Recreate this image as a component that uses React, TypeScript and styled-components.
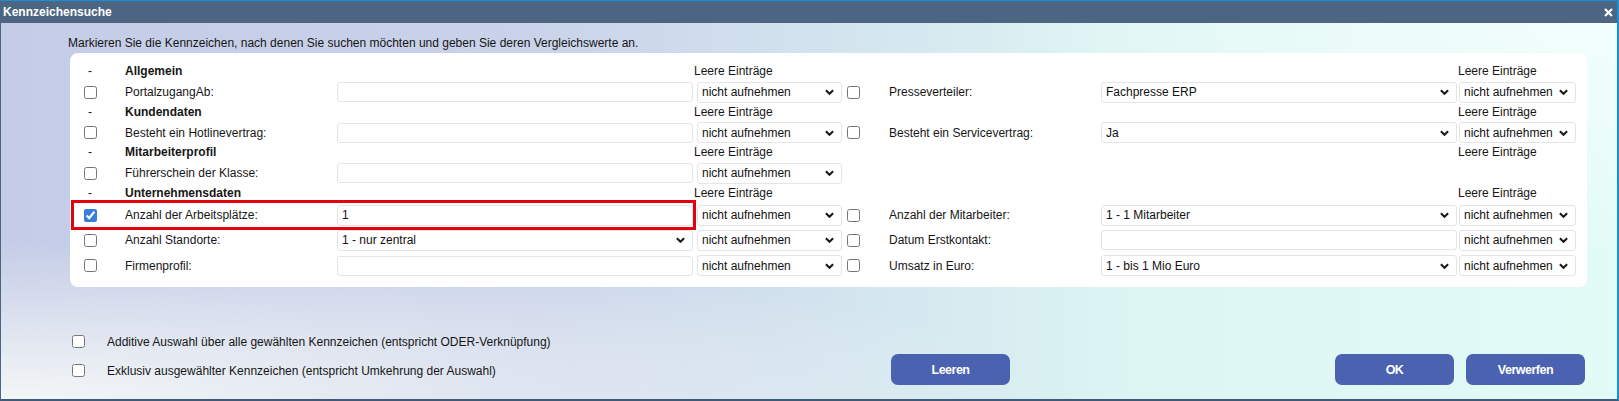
import React from "react";
import styled, { createGlobalStyle } from "styled-components";

const GlobalStyle = createGlobalStyle`
  html, body {
    margin: 0;
    padding: 0;
  }
  body {
    font-family: "Liberation Sans", Arial, sans-serif;
    font-size: 12px;
    color: #161616;
    background: #fff;
  }
`;

const Window = styled.div`
  box-sizing: border-box;
  width: 1619px;
  height: 401px;
  display: flex;
  flex-direction: column;
  border-top: 1px solid #1b8fd5;
  border-right: 2px solid #1b8fd5;
  border-left: 1px solid #4b6582;
  border-bottom: 2px solid #3e5a78;
  overflow: hidden;
`;

const TitleBar = styled.div`
  flex: none;
  height: 22px;
  background: #4b6582;
  display: flex;
  align-items: center;
  justify-content: space-between;
  padding: 0 4px 0 2px;
  color: #fff;
  font-weight: bold;
  font-size: 12px;
`;

const Body = styled.div`
  flex: 1;
  padding: 13px 0 0 69px;
  background:
    radial-gradient(110% 70% at 0% 100%, rgba(246, 249, 248, 0.95) 0%, rgba(246, 249, 248, 0) 60%),
    radial-gradient(40% 60% at 100% 0%, rgba(244, 254, 252, 0.9) 0%, rgba(244, 254, 252, 0) 100%),
    linear-gradient(90deg, #c4cce7 0%, #c9d2e9 32%, #d2e2ee 50%, #dcf5f3 70%, #e3fbf7 100%);
`;

const Intro = styled.div`
  margin-left: -2px;
  height: 14px;
  line-height: 14px;
`;

const Panel = styled.div`
  box-sizing: border-box;
  width: 1517px;
  margin-top: 3px;
  padding: 8px 11px 9px 14px;
  background: #fff;
  border-radius: 8px;
  display: flex;
  flex-direction: column;
`;

const COLS = "41px 212px 356px 152px 44px 212px 356px 119px";

const Row = styled.div<{ $h: number }>`
  display: grid;
  grid-template-columns: ${COLS};
  height: ${(p) => p.$h}px;
  align-items: center;
`;

const Highlight = styled.div`
  grid-column: 1 / 4;
  align-self: stretch;
  display: grid;
  grid-template-columns: 41px 212px 356px;
  align-items: center;
  margin: -3px -3px -3px -13px;
  padding-left: 10px;
  border: 3px solid #e3000f;
`;

const Dash = styled.span`
  padding-left: 4px;
`;

const SectionTitle = styled.span`
  font-weight: bold;
`;

const Hint = styled.span`
  padding-left: 1px;
`;

const Label = styled.span`
  white-space: nowrap;
`;

const Check = styled.input.attrs({ type: "checkbox" })<{ $ml?: number }>`
  width: 13px;
  height: 13px;
  margin: 0 0 0 ${(p) => p.$ml ?? 0}px;
  accent-color: #3b7ddd;
`;

const TextField = styled.input<{ $w: number; $h?: number }>`
  box-sizing: border-box;
  width: ${(p) => p.$w}px;
  height: ${(p) => p.$h ?? 20}px;
  margin: 0;
  padding: 0 4px;
  border: 1px solid #e5e5e5;
  border-radius: 3px;
  background: #fff;
  font-family: inherit;
  font-size: 12px;
  color: #111;
  outline: none;
`;

const SelectBox = styled.div<{ $w: number; $ml?: number }>`
  box-sizing: border-box;
  width: ${(p) => p.$w}px;
  height: 21px;
  margin-left: ${(p) => p.$ml ?? 0}px;
  padding: 0 7px 0 4px;
  border: 1px solid #e5e5e5;
  border-radius: 3px;
  background: #fff;
  display: flex;
  align-items: center;
  justify-content: space-between;
  color: #111;
  white-space: nowrap;
`;

const Footer = styled.div`
  width: 1517px;
  margin-top: 40px;
  display: grid;
  grid-template-columns: 821px 119px 1fr;
  grid-template-rows: 29px 29px;
`;

const Option = styled.label`
  grid-column: 1;
  display: flex;
  align-items: center;
  gap: 22px;
  padding-left: 2px;
`;

const ButtonGroup = styled.div`
  grid-column: 3;
  grid-row: 1 / 3;
  align-self: end;
  justify-self: end;
  display: flex;
  gap: 12px;
  margin-right: 2px;
`;

const Button = styled.button<{ $solo?: boolean }>`
  width: 119px;
  height: 31px;
  border: none;
  border-radius: 7px;
  background: #4a62b0;
  color: #fff;
  font-family: "Liberation Sans", Arial, sans-serif;
  font-weight: bold;
  font-size: 12.5px;
  letter-spacing: -0.5px;
  cursor: pointer;
  ${(p) => (p.$solo ? "grid-column: 2; grid-row: 1 / 3; align-self: end;" : "")}
`;

const Chevron = () => (
  <svg width="9" height="6" viewBox="0 0 10 6">
    <polyline points="1,1 5,5 9,1" fill="none" stroke="#1a1a1a" strokeWidth="2.3" />
  </svg>
);

const CloseIcon = () => (
  <svg width="9" height="9" viewBox="0 0 9 9">
    <line x1="1" y1="1" x2="8" y2="8" stroke="#fff" strokeWidth="2.2" />
    <line x1="8" y1="1" x2="1" y2="8" stroke="#fff" strokeWidth="2.2" />
  </svg>
);

type Field = { kind: "input"; value?: string } | { kind: "select"; value: string };

type DataRow = {
  label: string;
  checked?: boolean;
  left: Field;
  right?: { label: string; field: Field };
  highlight?: boolean;
  h: number;
};

type Block = { title: string; rows: DataRow[] };

const blocks: Block[] = [
  {
    title: "Allgemein",
    rows: [
      {
        label: "PortalzugangAb:",
        left: { kind: "input" },
        right: { label: "Presseverteiler:", field: { kind: "select", value: "Fachpresse ERP" } },
        h: 20.25,
      },
    ],
  },
  {
    title: "Kundendaten",
    rows: [
      {
        label: "Besteht ein Hotlinevertrag:",
        left: { kind: "input" },
        right: { label: "Besteht ein Servicevertrag:", field: { kind: "select", value: "Ja" } },
        h: 20.25,
      },
    ],
  },
  {
    title: "Mitarbeiterprofil",
    rows: [{ label: "Führerschein der Klasse:", left: { kind: "input" }, h: 20.25 }],
  },
  {
    title: "Unternehmensdaten",
    rows: [
      {
        label: "Anzahl der Arbeitsplätze:",
        checked: true,
        highlight: true,
        left: { kind: "input", value: "1" },
        right: { label: "Anzahl der Mitarbeiter:", field: { kind: "select", value: "1 - 1 Mitarbeiter" } },
        h: 24,
      },
      {
        label: "Anzahl Standorte:",
        left: { kind: "select", value: "1 - nur zentral" },
        right: { label: "Datum Erstkontakt:", field: { kind: "input" } },
        h: 26.5,
      },
      {
        label: "Firmenprofil:",
        left: { kind: "input" },
        right: { label: "Umsatz in Euro:", field: { kind: "select", value: "1 - bis 1 Mio Euro" } },
        h: 24.5,
      },
    ],
  },
];

function renderField(f: Field, tall?: boolean) {
  if (f.kind === "select") {
    return (
      <SelectBox $w={356}>
        <span>{f.value}</span>
        <Chevron />
      </SelectBox>
    );
  }
  return <TextField $w={356} $h={tall ? 21 : 20} defaultValue={f.value ?? ""} />;
}

function EmptySelect({ w, ml }: { w: number; ml: number }) {
  return (
    <SelectBox $w={w} $ml={ml}>
      <span>nicht aufnehmen</span>
      <Chevron />
    </SelectBox>
  );
}

function DataLine({ row }: { row: DataRow }) {
  const leftCells = (
    <>
      <Check defaultChecked={row.checked} />
      <Label>{row.label}</Label>
      {renderField(row.left, row.highlight)}
    </>
  );
  return (
    <Row $h={row.h}>
      {row.highlight ? <Highlight>{leftCells}</Highlight> : leftCells}
      <EmptySelect w={145} ml={4} />
      {row.right ? (
        <>
          <Check $ml={2} />
          <Label>{row.right.label}</Label>
          {renderField(row.right.field)}
          <EmptySelect w={117} ml={2} />
        </>
      ) : null}
    </Row>
  );
}

export default function App() {
  return (
    <>
      <GlobalStyle />
      <Window>
        <TitleBar>
          <span>Kennzeichensuche</span>
          <CloseIcon />
        </TitleBar>
        <Body>
          <Intro>
            Markieren Sie die Kennzeichen, nach denen Sie suchen möchten und geben Sie deren Vergleichswerte an.
          </Intro>
          <Panel>
            {blocks.map((b, i) => (
              <React.Fragment key={b.title}>
                <Row $h={i === 0 ? 20.5 : 20.25}>
                  <Dash>-</Dash>
                  <SectionTitle>{b.title}</SectionTitle>
                  <span />
                  <Hint>Leere Einträge</Hint>
                  <span />
                  <span />
                  <span />
                  <Hint>Leere Einträge</Hint>
                </Row>
                {b.rows.map((r) => (
                  <DataLine key={r.label} row={r} />
                ))}
              </React.Fragment>
            ))}
          </Panel>
          <Footer>
            <Option>
              <Check />
              <span>Additive Auswahl über alle gewählten Kennzeichen (entspricht ODER-Verknüpfung)</span>
            </Option>
            <Option>
              <Check />
              <span>Exklusiv ausgewählter Kennzeichen (entspricht Umkehrung der Auswahl)</span>
            </Option>
            <Button $solo>Leeren</Button>
            <ButtonGroup>
              <Button>OK</Button>
              <Button>Verwerfen</Button>
            </ButtonGroup>
          </Footer>
        </Body>
      </Window>
    </>
  );
}
